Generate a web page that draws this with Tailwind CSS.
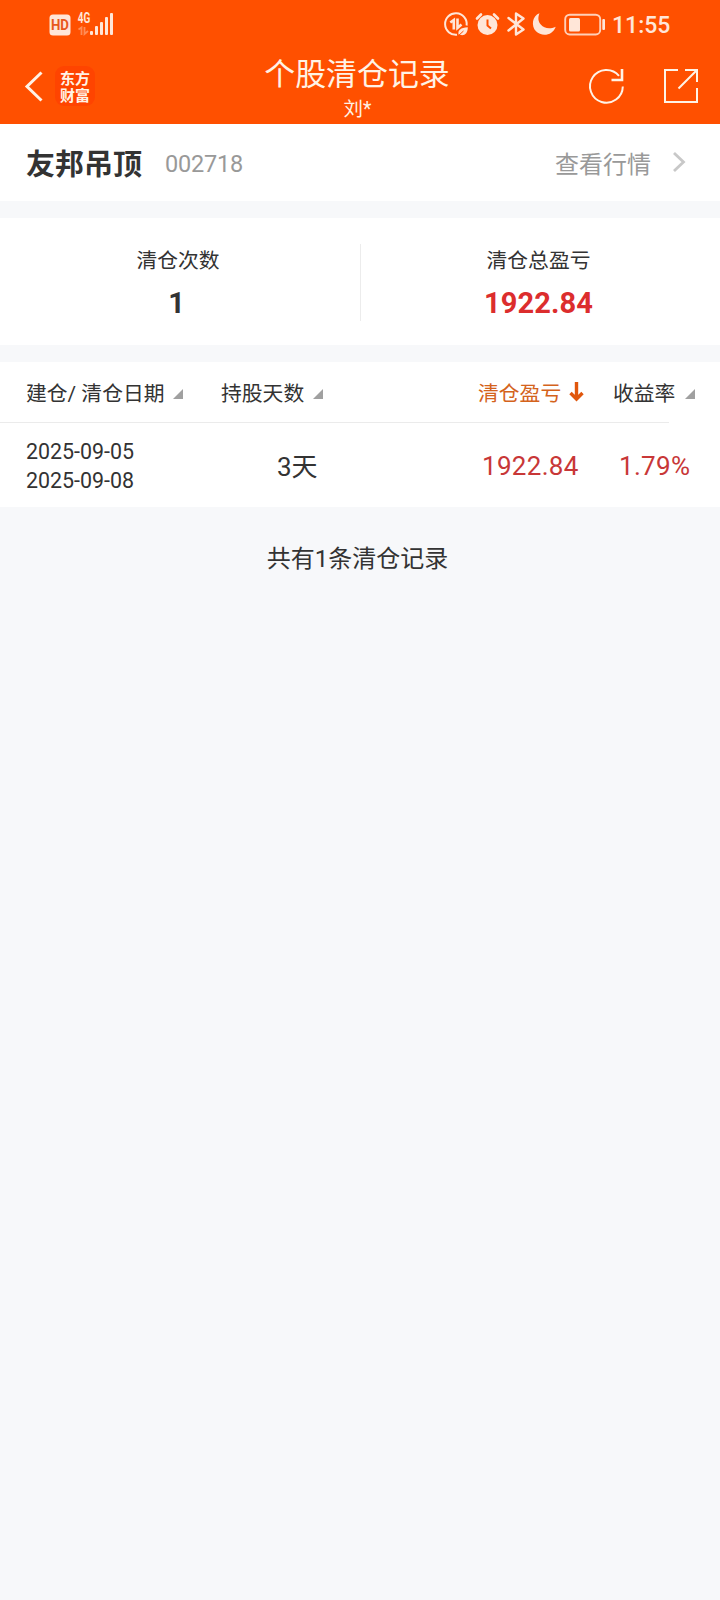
<!DOCTYPE html>
<html lang="zh-CN">
<head>
<meta charset="utf-8">
<title>个股清仓记录</title>
<script src="https://cdn.jsdelivr.net/npm/@tailwindcss/browser@4"></script>
</head>
<body class="min-h-[1600px] w-[720px] bg-[#f7f8fa] font-[Roboto,'Noto_Sans_CJK_SC',sans-serif] whitespace-nowrap text-[#333333]">
<header class="h-[124px] bg-[#ff5000] text-[#fff3e6]">
  <!-- status bar -->
  <div class="flex h-12 items-center justify-between pr-[49px] pl-[49px] text-[#ffe6d8]">
    <svg class="h-12 w-[66px]" viewBox="49 0 66 48" fill="currentColor">
      <rect x="49.5" y="14.5" width="21" height="21" rx="3.5"/>
      <text x="60" y="30" text-anchor="middle" font-family="Roboto" font-weight="700" font-size="14" textLength="18" lengthAdjust="spacingAndGlyphs" fill="#e8581c">HD</text>
      <text x="77.7" y="23" font-family="Roboto" font-weight="700" font-size="14" textLength="12.5" lengthAdjust="spacingAndGlyphs">4G</text>
      <path d="M78.500 29.500l3-2v7.500M84.500 27v7l3.500-3" fill="none" stroke="currentColor" stroke-width="1.800" opacity=".4"/>
      <rect x="90" y="31" width="3" height="4" rx="1"/><rect x="95" y="26" width="3" height="9" rx="1"/><rect x="100" y="22" width="3" height="13" rx="1"/><rect x="105" y="17" width="3" height="18" rx="1"/><rect x="110" y="13" width="3" height="22" rx="1"/>
    </svg>
    <div class="flex items-center">
      <svg class="mr-[6px] h-12 w-[164px]" viewBox="442 0 164 48" fill="none" stroke="currentColor" stroke-width="2">
        <path d="M466.600 25.500A10.800 10.800 0 1 0 457 34.800"/>
        <path d="M450.300 22.500l3.500-2.500v9.500M457.500 18.500v9.500l4-3.500" stroke-width="2.600"/>
        <path d="M458.500 34.500c-.8-4.500 2-6.800 9.300-7.300 0 6.300-3.500 9-7.800 7.600z" fill="currentColor" stroke="none"/>
        <path d="M458 36l5.500-5" stroke="#ff5000" stroke-width="1"/>
        <circle cx="487.500" cy="25" r="10" fill="currentColor" stroke="none"/>
        <path d="M477 18.500l4-4M498 18.500l-4-4" stroke-width="2.600" stroke-linecap="round"/>
        <path d="M487.500 19.500v6l3.500 3" stroke="#ff5000"/>
        <path d="M508.500 18l15 11.500-7.500 5V13.500l7.500 5-15 12" stroke-width="2.400" stroke-linejoin="round" stroke-linecap="round"/>
        <path d="M539.500 13.200C532 16 531 26 536 31.300c6 6 17 4 19.700-4.600-6 2.800-11.700 1.600-14.700-1.900-3-3.400-3.300-7.300-1.500-11.600z" fill="currentColor" stroke="none"/>
        <rect x="565.200" y="14.700" width="35" height="19.800" rx="4.500" stroke-width="1.900" opacity=".85"/>
        <rect x="569" y="18" width="11" height="13.500" rx="1.500" fill="currentColor" stroke="none"/>
        <rect x="602.300" y="19" width="2.700" height="11" rx="1" fill="currentColor" stroke="none"/>
      </svg>
      <span class="w-[59px] pt-[3px] text-[23px] leading-none font-medium">11:55</span>
    </div>
  </div>
  <!-- navigation -->
  <nav class="flex h-[76px]">
    <svg class="mt-[23px] ml-6 h-[32px] w-5" viewBox="24 71 20 32" fill="none" stroke="currentColor" stroke-width="3"><path d="M41.500 72.500L27 86.500 41.500 100.500"/></svg>
    <div class="mt-[18px] ml-[11px] flex h-10 w-10 flex-col items-center justify-center rounded-[9px] bg-[#ff4400] pb-px font-['Noto_Sans_CJK_SC',sans-serif] text-[15px] leading-[17px] font-bold"><span>东方</span><span>财富</span></div>
    <div class="ml-[157px] flex w-[210px] flex-col items-center">
      <h1 class="mt-[9px] text-[30.900px] leading-[36px]">个股清仓记录</h1>
      <span class="mt-[5px] ml-px text-[19.500px] leading-[24px]">刘*</span>
    </div>
    <svg class="mt-[19px] ml-[125px] h-10 w-10" viewBox="587 67 40 40" fill="none" stroke="currentColor" stroke-width="2"><path d="M622.800 86.500A16.400 16.400 0 1 1 619 75.800"/><path d="M622 69v11H611.500" stroke-width="2.600"/></svg>
    <svg class="mt-[19px] ml-9 h-10 w-9" viewBox="663 67 36 40" fill="none" stroke="currentColor" stroke-width="2"><path d="M678 70H665V102H697V88M685 70h12v12M697 70L678.500 88.500"/></svg>
  </nav>
</header>

<main>
  <section class="flex h-[77px] items-center bg-white pl-[26px]">
    <h2 class="w-[139px] pt-[5px] text-[29px] leading-none font-bold">友邦吊顶</h2>
    <span class="w-[390px] pt-[4px] text-[23.500px] leading-none tracking-[-0.2px] text-[#999999]">002718</span>
    <span class="w-[96px] pt-[4px] text-[24px] leading-none text-[#999999]">查看行情</span>
    <svg class="mb-px ml-5 h-6 w-4" viewBox="0 0 16 24" fill="none" stroke="#c8c8c8" stroke-width="2.800"><path d="M3 3l9.500 9L3 21"/></svg>
  </section>

  <section class="mt-[17px] flex h-[127px] items-center bg-white">
    <div class="flex w-[360px] flex-col items-center pt-[2px] pr-[4px]">
      <span class="text-[20.800px] leading-[30px]">清仓次数</span>
      <strong class="mt-[10px] mr-[3px] text-[29px] leading-[34px] font-bold">1</strong>
    </div>
    <div class="mt-[2px] h-[77px] w-px bg-[#ececec]"></div>
    <div class="flex w-[359px] flex-col items-center pt-[2px] pr-[4px]">
      <span class="text-[20.800px] leading-[30px]">清仓总盈亏</span>
      <strong class="mt-[10px] text-[29px] leading-[34px] font-bold tracking-[0.1px] text-[#dc2d2d]">1922.84</strong>
    </div>
  </section>

  <section class="mt-[17px] h-[145px] bg-white">
    <div class="flex h-[60px] items-center text-[20.800px] leading-[30px]">
      <span class="ml-[26px] w-[147px] pt-[3px]">建仓/ 清仓日期</span>
      <svg class="mt-1 h-[10px] w-[10px]" viewBox="0 0 10 10" fill="#a0a0a0"><path d="M10 0v10H0z"/></svg>
      <span class="ml-[38px] w-[92px] pt-[3px]">持股天数</span>
      <svg class="mt-1 h-[10px] w-[10px]" viewBox="0 0 10 10" fill="#a0a0a0"><path d="M10 0v10H0z"/></svg>
      <span class="ml-[155px] w-[91px] pt-[3px] text-[#d4631c]">清仓盈亏</span>
      <svg class="h-5 w-[15px]" viewBox="0 0 15 20" fill="none" stroke="#e0560c" stroke-width="3.400"><path d="M7.500 0v17M1.500 11l6 6 6-6"/></svg>
      <span class="ml-[29px] w-[72px] pt-[3px]">收益率</span>
      <svg class="mt-1 h-[10px] w-[10px]" viewBox="0 0 10 10" fill="#a0a0a0"><path d="M10 0v10H0z"/></svg>
    </div>
    <div class="h-px w-[669px] bg-[#ebebeb]"></div>
    <div class="flex h-[84px] items-center text-[26px] leading-none">
      <div class="ml-[26px] w-[251px] pt-px text-[21.400px] leading-[29px]"><div>2025-09-05</div><div>2025-09-08</div></div>
      <span class="w-[205px] pt-[3px] text-[26px]">3天</span>
      <span class="w-[137px] pt-px tracking-[0.3px] text-[#c83737]">1922.84</span>
      <span class="pt-px tracking-[0.3px] text-[#c83737]">1.79%</span>
    </div>
  </section>
  <p class="mt-9 pr-[5px] text-center text-[24px] leading-[32px]">共有1条清仓记录</p>
</main>
</body>
</html>
